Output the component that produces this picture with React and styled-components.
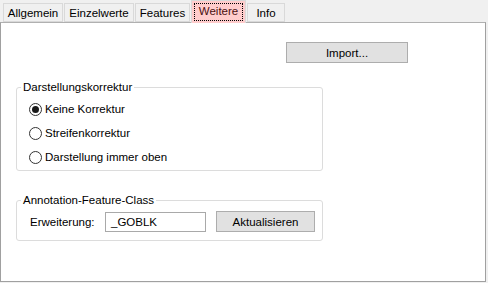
import React, { useState } from 'react';
import styled, { createGlobalStyle } from 'styled-components';

const GlobalStyle = createGlobalStyle`
  html, body {
    margin: 0;
    padding: 0;
    background: #f0f0f0;
  }
  body {
    font-family: "Liberation Sans", Arial, sans-serif;
    font-size: 11.5px;
    color: #000;
  }
`;

const Window = styled.div`
  width: 488px;
  height: 283px;
  background: #f0f0f0;
  display: flex;
  flex-direction: column;
`;

const TabStrip = styled.div`
  display: flex;
  align-items: flex-end;
  height: 22px;
  padding-left: 3px;
`;

const Tab = styled.div`
  box-sizing: border-box;
  height: ${p => (p.active ? '23px' : '19px')};
  width: ${p => p.w}px;
  margin-right: 1px;
  margin-bottom: ${p => (p.active ? '-1px' : '0')};
  background: ${p => (p.active ? '#ffcccc' : '#f0f0f0')};
  border: 1px solid #d9d9d9;
  border-bottom: ${p => (p.active ? 'none' : '1px solid #d9d9d9')};
  display: flex;
  align-items: center;
  justify-content: center;
  padding: 2px;
  position: relative;
  z-index: ${p => (p.active ? 2 : 1)};
  cursor: default;
`;

const TabLabel = styled.span`
  box-sizing: border-box;
  height: 100%;
  width: 100%;
  display: flex;
  align-items: center;
  justify-content: center;
  color: ${p => (p.active ? '#4a1010' : '#000')};
  border: 1px dotted ${p => (p.active ? '#000' : 'transparent')};
  padding-bottom: ${p => (p.active ? '2px' : '0')};
`;

const Panel = styled.div`
  box-sizing: border-box;
  width: 486px;
  height: 260px;
  background: #fff;
  border: 1px solid #a0a0a0;
  border-top-color: #b0b0b0;
  display: flex;
  flex-direction: column;
  padding-left: 15px;
`;

const TopRow = styled.div`
  display: flex;
  justify-content: flex-end;
  padding-right: 77px;
  margin-top: 19px;
`;

const Button = styled.button`
  box-sizing: border-box;
  width: ${p => p.w}px;
  height: 21px;
  background: #e1e1e1;
  border: 1px solid #adadad;
  font-family: "Liberation Sans", Arial, sans-serif;
  font-size: 11.5px;
  color: #000;
  padding: 0;
  margin: 0;
  display: flex;
  align-items: center;
  justify-content: center;
`;

const GroupBox = styled.fieldset`
  box-sizing: border-box;
  width: 307px;
  height: ${p => p.h}px;
  margin: ${p => p.mt}px 0 0 0;
  padding: 0;
  border: 1px solid #dcdcdc;
  border-radius: 3px;
  min-width: 0;
`;

const Legend = styled.legend`
  padding: 0 2px 0 2px;
  margin-left: 4px;
  font-size: 11.5px;
  line-height: 14px;
  color: #000;
`;

const RadioList = styled.div`
  display: flex;
  flex-direction: column;
  gap: 10px;
  padding: 8px 0 0 12px;
`;

const RadioRow = styled.label`
  display: flex;
  align-items: center;
  gap: 3px;
  height: 14px;
  line-height: 14px;
`;

const RadioCircle = styled.span`
  box-sizing: border-box;
  width: 13px;
  height: 13px;
  border-radius: 50%;
  border: 1px solid #333;
  background: #fff;
  display: flex;
  align-items: center;
  justify-content: center;
  &::after {
    content: '';
    width: 7px;
    height: 7px;
    border-radius: 50%;
    background: ${p => (p.checked ? '#1a1a1a' : 'transparent')};
  }
`;

const FieldRow = styled.div`
  display: flex;
  align-items: center;
  padding: 4px 0 0 13px;
`;

const FieldLabel = styled.span`
  width: 75px;
  color: #000;
`;

const TextBox = styled.div`
  box-sizing: border-box;
  width: 101px;
  height: 20px;
  border: 1px solid #a9a9a9;
  background: #fff;
  padding: 0 0 0 5px;
  display: flex;
  align-items: center;
  margin-right: 10px;
`;

const tabs = [
  { name: 'Allgemein', w: 60 },
  { name: 'Einzelwerte', w: 70 },
  { name: 'Features', w: 55 },
  { name: 'Weitere', w: 55 },
  { name: 'Info', w: 38 },
];

const options = ['Keine Korrektur', 'Streifenkorrektur', 'Darstellung immer oben'];

export default function App() {
  const [active, setActive] = useState('Weitere');
  const [choice, setChoice] = useState(0);

  return (
    <>
      <GlobalStyle />
      <Window>
        <TabStrip>
          {tabs.map(t => (
            <Tab key={t.name} w={t.w} active={t.name === active} onClick={() => setActive(t.name)}>
              <TabLabel active={t.name === active}>{t.name}</TabLabel>
            </Tab>
          ))}
        </TabStrip>
        <Panel>
          <TopRow>
            <Button w={122}>Import...</Button>
          </TopRow>
          <GroupBox h={91} mt={17}>
            <Legend>Darstellungskorrektur</Legend>
            <RadioList>
              {options.map((o, i) => (
                <RadioRow key={o} onClick={() => setChoice(i)}>
                  <RadioCircle checked={choice === i} />
                  {o}
                </RadioRow>
              ))}
            </RadioList>
          </GroupBox>
          <GroupBox h={48} mt={22}>
            <Legend>Annotation-Feature-Class</Legend>
            <FieldRow>
              <FieldLabel>Erweiterung:</FieldLabel>
              <TextBox>_GOBLK</TextBox>
              <Button w={99}>Aktualisieren</Button>
            </FieldRow>
          </GroupBox>
        </Panel>
      </Window>
    </>
  );
}
